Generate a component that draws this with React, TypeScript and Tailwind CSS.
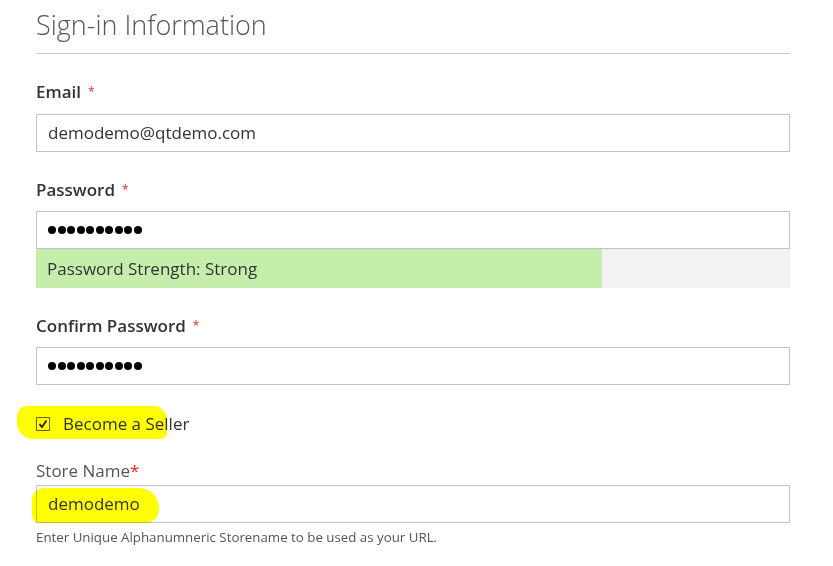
import React from 'react';

const Label = ({ text }: { text: string }) => (
  <div className="text-[17px] font-semibold text-[#333] leading-[22px] flex items-center">
    {text}
    <span className="text-[#e02b27] text-[12px] ml-[7px] font-normal">*</span>
  </div>
);

const Dots = () => (
  <div className="flex gap-[1.5px] items-center">
    {Array.from({ length: 10 }).map((_, i) => (
      <span key={i} className="w-[8px] h-[8px] rounded-full bg-black" />
    ))}
  </div>
);

export default function App() {
  return (
    <div className="w-[833px] h-[566px] bg-white overflow-hidden" style={{ fontFamily: '"Open Sans", sans-serif' }}>
      <div className="ml-[36px] w-[754px] pt-[7px]">
        {/* Title */}
        <h1 className="text-[27px] font-light text-[#575757] leading-[36px] pb-[10px] border-b border-[#cccccc]">
          Sign-in Information
        </h1>

        {/* Email */}
        <div className="mt-[27px]">
          <Label text="Email" />
          <div className="mt-[11px] h-[38px] border border-[#c2c2c2] flex items-center px-[11px] text-[17px] text-[#333]">
            demodemo@qtdemo.com
          </div>
        </div>

        {/* Password */}
        <div className="mt-[27px]">
          <Label text="Password" />
          <div className="mt-[10px] h-[38px] border border-[#c2c2c2] flex items-center px-[11px]">
            <Dots />
          </div>
          <div className="h-[39px] bg-[#f2f2f2] flex">
            <div className="w-[566px] bg-[#c5eeac] flex items-center px-[11px] text-[17px] text-[#333]">
              Password Strength: Strong
            </div>
          </div>
        </div>

        {/* Confirm password */}
        <div className="mt-[27px]">
          <Label text="Confirm Password" />
          <div className="mt-[10px] h-[38px] border border-[#c2c2c2] flex items-center px-[11px]">
            <Dots />
          </div>
        </div>

        {/* Become a seller */}
        <div className="relative mt-[30px] flex items-center h-[18px]">
          <div className="absolute left-[-19px] top-[-9px] w-[150px] h-[33px] bg-[#ffff00] mix-blend-multiply rounded-[10px_14px_6px_16px]" />
          <span className="relative w-[14px] h-[14px] border border-[#666] bg-white flex items-center justify-center mix-blend-multiply">
            <svg width="10" height="10" viewBox="0 0 10 10">
              <path d="M1.5 5.2 L4 8 L8.5 1.5" fill="none" stroke="#222" strokeWidth="1.8" />
            </svg>
          </span>
          <span className="relative ml-[13px] text-[17px] text-[#333]">Become a Seller</span>
        </div>

        {/* Store name */}
        <div className="mt-[27px]">
          <div className="text-[17px] text-[#555] leading-[22px]">
            Store Name<span className="text-[#e02b27]">*</span>
          </div>
          <div className="relative mt-[3px] h-[38px] border border-[#c2c2c2] flex items-center px-[11px] text-[17px] text-[#333]">
            <div className="absolute left-[-5px] top-[2px] w-[127px] h-[35px] bg-[#ffff00] mix-blend-multiply rounded-[12px_20px_14px_8px]" />
            <span className="relative">demodemo</span>
          </div>
          <div className="mt-[5px] text-[13.3px] text-[#555]">
            Enter Unique Alphanumneric Storename to be used as your URL.
          </div>
        </div>
      </div>
    </div>
  );
}
